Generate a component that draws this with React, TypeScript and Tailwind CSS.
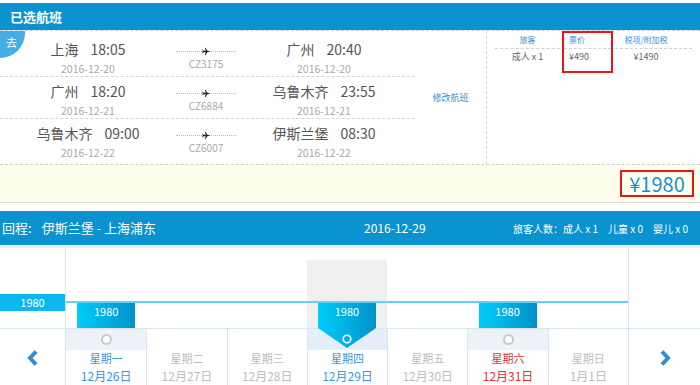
import React from 'react'

const flights = [
  { from: '上海', dep: '18:05', depDate: '2016-12-20', no: 'CZ3175', to: '广州', arr: '20:40', arrDate: '2016-12-20' },
  { from: '广州', dep: '18:20', depDate: '2016-12-21', no: 'CZ6884', to: '乌鲁木齐', arr: '23:55', arrDate: '2016-12-21' },
  { from: '乌鲁木齐', dep: '09:00', depDate: '2016-12-22', no: 'CZ6007', to: '伊斯兰堡', arr: '08:30', arrDate: '2016-12-22' },
]

const days = [
  { week: '星期一', date: '12月26日', state: 'open' },
  { week: '星期二', date: '12月27日', state: 'off' },
  { week: '星期三', date: '12月28日', state: 'off' },
  { week: '星期四', date: '12月29日', state: 'selected' },
  { week: '星期五', date: '12月30日', state: 'off' },
  { week: '星期六', date: '12月31日', state: 'red' },
  { week: '星期日', date: '1月1日', state: 'off' },
]

function Place({ city, time, date }: { city: string; time: string; date: string }) {
  return (
    <div className="w-[136px] flex flex-col items-center">
      <div className="mt-[4px] h-[20px] leading-[20px] text-[14px] text-[#555] whitespace-nowrap">
        {city}
        <span className="ml-[12px]">{time}</span>
      </div>
      <div className="mt-[3px] h-[14px] leading-[14px] text-[10.5px] text-[#aaa]">{date}</div>
    </div>
  )
}

function Plane() {
  return (
    <svg width="9" height="9" viewBox="0 0 10 10">
      <path
        d="M9.6 5 L6 4.2 L3.8 0.8 H3 L4.2 4.2 H1.8 L1 3 H0.4 L0.8 5 L0.4 7 H1 L1.8 5.8 H4.2 L3 9.2 H3.8 L6 5.8 Z"
        fill="#222"
      />
    </svg>
  )
}

function Chevron({ dir }: { dir: 'left' | 'right' }) {
  return (
    <svg width="14" height="18" viewBox="0 0 14 18">
      <polyline
        points={dir === 'left' ? '10,2.5 4,9 10,15.5' : '4,2.5 10,9 4,15.5'}
        fill="none"
        stroke="#2d8ed6"
        strokeWidth="4"
        strokeLinejoin="miter"
      />
    </svg>
  )
}

export default function App() {
  return (
    <div className="w-[700px] h-[385px] overflow-hidden bg-white pt-[3px] font-['Noto_Sans_CJK_SC',sans-serif]">
      <div className="h-[27px] bg-[#0a93cf] flex items-center pl-[10px] text-[13px] font-bold text-white">
        已选航班
      </div>

      <div className="flex h-[134px] border-t border-dashed border-[#cfcfcf]">
        <div className="relative w-[415px] pt-[4px] pb-[3px]">
          <div className="absolute top-0 left-0 w-[25px] h-[27px] rounded-br-[25px] bg-[#45ade2] text-white text-[11px] leading-[14px] pl-[6px] pt-[4px]">
            去
          </div>
          {flights.map((f, i) => (
            <div
              key={f.no}
              className={`h-[42px] flex pl-[20px] ${i < 2 ? 'border-b border-dashed border-[#d5d5d5]' : ''}`}
            >
              <Place city={f.from} time={f.dep} date={f.depDate} />
              <div className="w-[100px] flex flex-col items-center">
                <div className="mt-[11px] h-[10px] w-[60px] flex items-center">
                  <div className="flex-1 border-t border-dotted border-[#bbb]" />
                  <Plane />
                  <div className="flex-1 border-t border-dotted border-[#bbb]" />
                </div>
                <div className="mt-[1px] h-[14px] leading-[14px] text-[10px] text-[#aaa]">{f.no}</div>
              </div>
              <Place city={f.to} time={f.arr} date={f.arrDate} />
            </div>
          ))}
        </div>
        <div className="w-[72px] flex items-center justify-center text-[9px] text-[#3a8fd0] border-r border-dashed border-[#d5d5d5]">
          修改航班
        </div>
        <div className="flex-1 flex pl-[6px]">
          {[
            { head: '旅客', val: '成人 x 1', w: 'w-[69px]', align: 'items-center', red: false },
            { head: '票价', val: '¥490', w: 'w-[51px]', align: 'items-start pl-[5px]', red: true },
            { head: '税项/附加税', val: '¥1490', w: 'w-[81px]', align: 'items-center pr-[15px]', red: false },
          ].map((c) => (
            <div
              key={c.head}
              className={`${c.w} h-[42px] flex flex-col border-2 ${c.red ? 'border-[#e8161b]' : 'border-transparent'}`}
            >
              <div className={`h-[16px] leading-[14px] text-[8px] flex flex-col border-b border-dashed border-[#d0d0d0] text-[#3d8fd6] ${c.align}`}>
                {c.head}
              </div>
              <div className={`h-[16px] leading-[16px] text-[9px] flex flex-col text-[#666] ${c.align}`}>{c.val}</div>
            </div>
          ))}
        </div>
      </div>

      <div className="h-[38px] bg-[#fefeed] border-t border-dashed border-[#cfcfcf] flex items-center justify-end pr-[6px]">
        <div className="h-[27px] w-[74px] border-2 border-[#e8161b] flex items-center justify-center text-[20px] text-[#1b8fd4] leading-none">
          ¥1980
        </div>
      </div>
      <div className="h-px bg-[#dedede]" />

      <div className="mt-[8px] h-[34px] bg-[#0a93cf] flex items-center text-white">
        <div className="w-[364px] pl-[2px] text-[13px]">
          回程:<span className="ml-[10px]">伊斯兰堡 - 上海浦东</span>
        </div>
        <div className="text-[12px]">2016-12-29</div>
        <div className="flex-1" />
        <div className="pr-[12px] text-[10px] whitespace-nowrap">
          旅客人数：成人 x 1<span className="ml-[10px]">儿童 x 0</span>
          <span className="ml-[10px]">婴儿 x 0</span>
        </div>
      </div>

      <div className="mt-[1px] flex h-[140px] border-t-2 border-[#e3eef7]">
        <div className="w-[66px] flex flex-col border-r border-[#d9e6f1]">
          <div className="h-[81px] border-b border-[#d9e6f1] pt-[46px]">
            <div className="h-[17px] bg-[#0bb7ee] text-white text-[11px] leading-[17px] text-center">1980</div>
          </div>
          <div className="h-[57px] flex items-center justify-center">
            <Chevron dir="left" />
          </div>
        </div>

        <div className="flex-1 flex">
          {days.map((d, i) => {
            const selected = d.state === 'selected'
            const priced = d.state !== 'off'
            const color =
              d.state === 'off' ? 'text-[#bdbdbd]' : d.state === 'red' ? 'text-[#e0312f]' : 'text-[#3a98d8]'
            return (
              <div key={d.week} className="flex-1 flex flex-col">
                <div className="h-[81px] border-b border-[#d9e6f1] pt-[12px]">
                  <div className={`h-full flex flex-col ${selected ? 'bg-[#f0f0f0]' : ''}`}>
                    <div className="h-[41px] shrink-0" />
                    <div className="h-[2px] shrink-0 bg-[#5fd3f7]" />
                    <div className="flex-1 flex justify-center">
                      {priced && (
                        <div className="relative z-10 w-[58px] h-full bg-gradient-to-r from-[#00cdfb] to-[#0092c9] text-white text-[11px] leading-[16px] text-center">
                          1980
                          {selected && (
                            <svg className="absolute top-full left-0" width="58" height="20" viewBox="0 0 58 20">
                              <defs>
                                <linearGradient id="tagfill" x1="0" x2="1" y1="0" y2="0">
                                  <stop offset="0" stopColor="#00cdfb" />
                                  <stop offset="1" stopColor="#0092c9" />
                                </linearGradient>
                              </defs>
                              <polygon points="0,0 58,0 29,20" fill="url(#tagfill)" />
                              <circle cx="29" cy="11" r="3.8" fill="none" stroke="#fff" strokeWidth="1.6" />
                            </svg>
                          )}
                        </div>
                      )}
                    </div>
                  </div>
                </div>
                <div className={`h-[57px] flex flex-col ${i > 0 ? 'border-l border-[#d9e6f1]' : ''}`}>
                  <div
                    className={`h-[21px] flex items-center justify-center ${
                      selected ? 'bg-[#e3eef8]' : priced ? 'bg-[#ecf2f7]' : ''
                    }`}
                  >
                    {priced && !selected && (
                      <div className="w-[11px] h-[11px] rounded-full border-2 border-[#cacaca] bg-white" />
                    )}
                  </div>
                  <div className={`h-[17px] leading-[17px] text-center text-[11px] ${color}`}>{d.week}</div>
                  <div className={`h-[17px] leading-[17px] text-center text-[12px] ${color}`}>{d.date}</div>
                </div>
              </div>
            )
          })}
        </div>

        <div className="w-[72px] flex flex-col border-l border-[#d9e6f1]">
          <div className="h-[81px] border-b border-[#d9e6f1]" />
          <div className="h-[57px] flex items-center justify-center">
            <Chevron dir="right" />
          </div>
        </div>
      </div>
    </div>
  )
}
